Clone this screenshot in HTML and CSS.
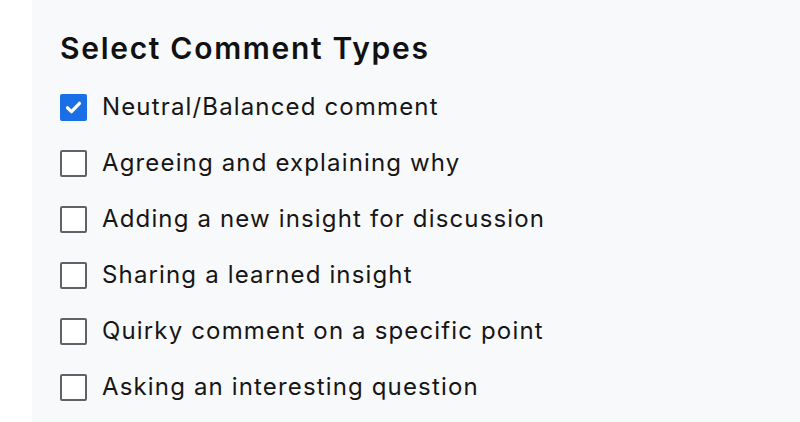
FILE: index.html
```html
<!DOCTYPE html>
<html lang="en">
<head>
<meta charset="utf-8">
<link rel="stylesheet" href="styles.css">
</head>
<body>
<div class="panel">
  <h2 class="title">Select Comment Types</h2>
  <ul class="options">
    <li class="option"><span class="box checked"><svg viewBox="0 0 27 27" width="27" height="27"><path d="M7.5 13.8l4 3.9 8-8.4" fill="none" stroke="#fff" stroke-width="3.2" stroke-linecap="round" stroke-linejoin="round"/></svg></span><span class="label">Neutral/Balanced comment</span></li>
    <li class="option"><span class="box"></span><span class="label">Agreeing and explaining why</span></li>
    <li class="option"><span class="box"></span><span class="label">Adding a new insight for discussion</span></li>
    <li class="option"><span class="box"></span><span class="label">Sharing a learned insight</span></li>
    <li class="option"><span class="box"></span><span class="label">Quirky comment on a specific point</span></li>
    <li class="option"><span class="box"></span><span class="label">Asking an interesting question</span></li>
  </ul>
</div>
</body>
</html>
```

FILE: styles.css
```css
html, body {
  margin: 0;
  padding: 0;
  background: #ffffff;
}
body {
  font-family: Inter, "Noto Sans", sans-serif;
  color: #111111;
  height: 422px;
  overflow: hidden;
}
.panel {
  margin-left: 32px;
  background: #f8f9fb;
  height: 422px;
  padding: 28px 0 0 28px;
  box-sizing: border-box;
}
.title {
  margin: 0;
  font-size: 30px;
  font-weight: 600;
  line-height: 40px;
  letter-spacing: 1.7px;
}
.options {
  list-style: none;
  margin: 0;
  padding: 0;
  margin-top: 11px;
}
.option {
  display: flex;
  align-items: center;
  height: 56px;
  gap: 15px;
}
.box {
  width: 27px;
  height: 27px;
  box-sizing: border-box;
  border: 2.5px solid #5f6368;
  border-radius: 2px;
  background: #ffffff;
  flex: none;
  display: flex;
}
.box.checked {
  background: #1b6fe6;
  border: none;
}
.label {
  font-size: 24px;
  line-height: 30px;
  letter-spacing: 1.15px;
  color: #161616;
}
```
